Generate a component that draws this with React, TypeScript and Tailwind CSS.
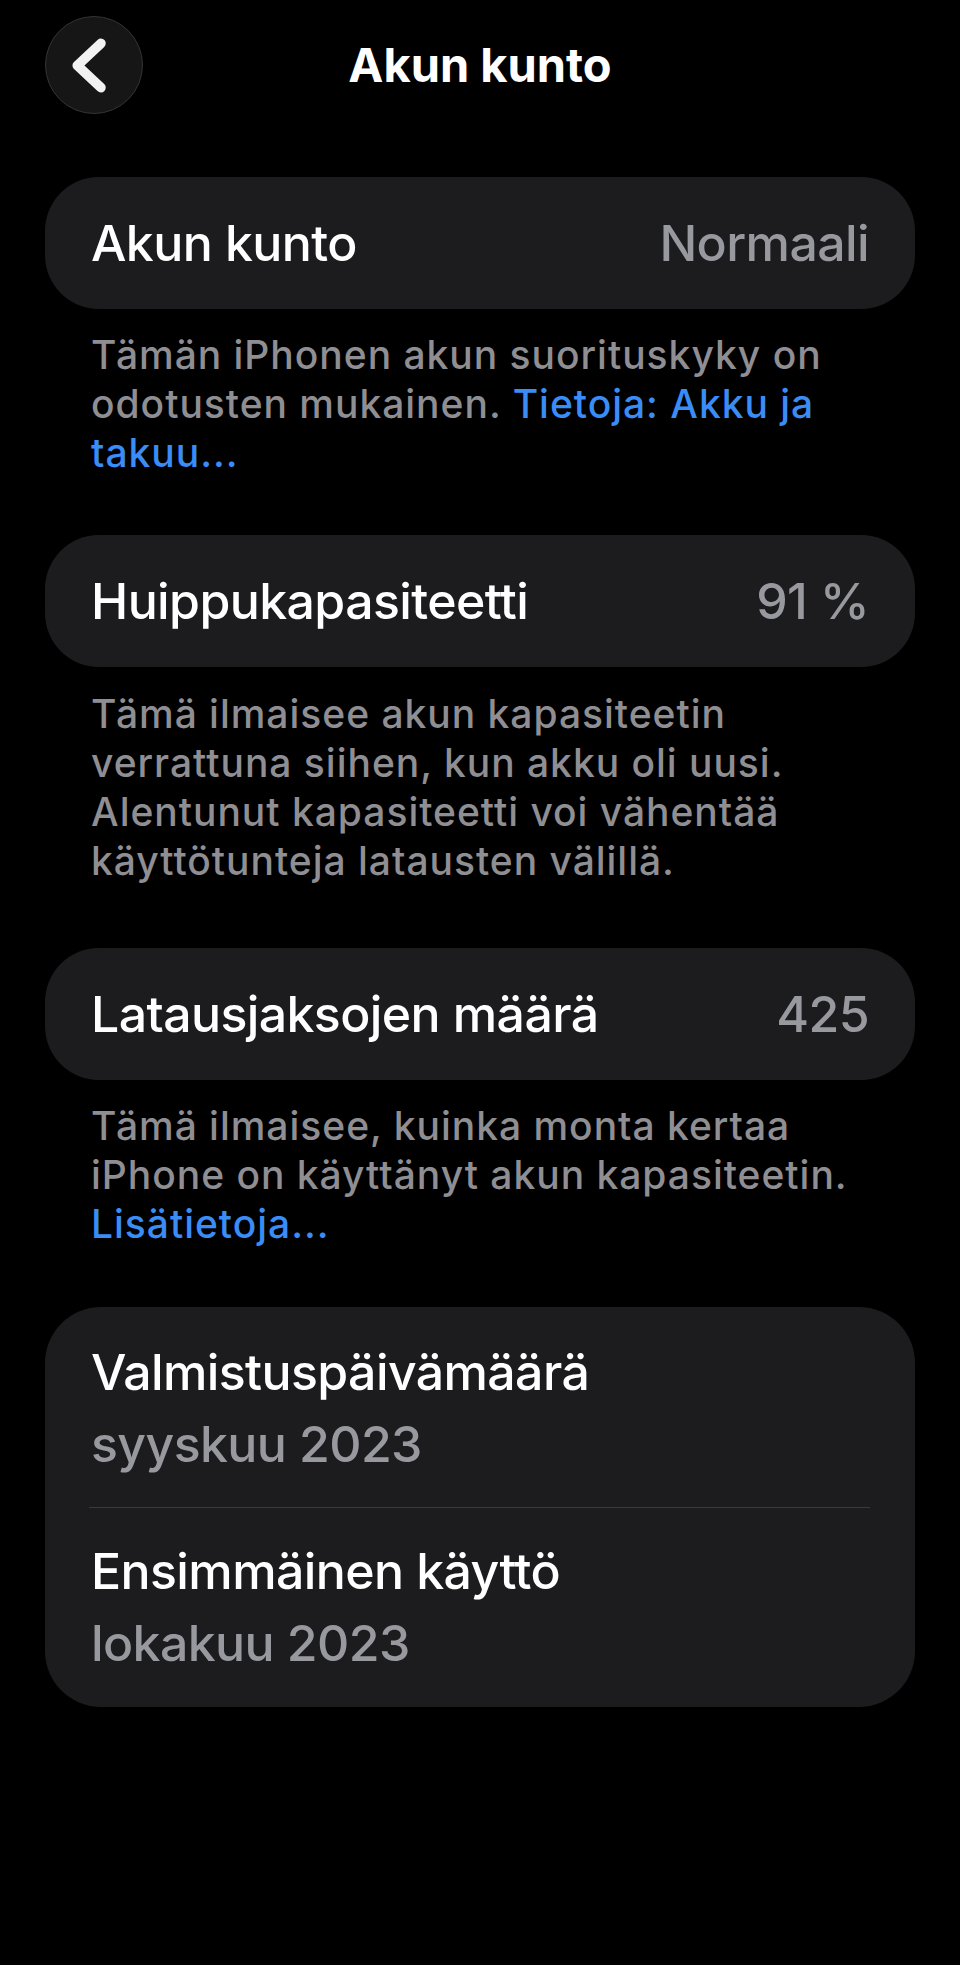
import type { ReactNode } from "react";

const font = "font-['Inter','Noto_Sans',sans-serif]";

function BackButton() {
  return (
    <button
      type="button"
      aria-label="Takaisin"
      className="flex h-[98px] w-[98px] items-center justify-center rounded-full border border-[#343436] bg-[#161617]"
    >
      <svg width="98" height="98" viewBox="0 0 98 98" fill="none" aria-hidden="true">
        <path
          d="M56 27 L32 49.5 L56 72"
          stroke="#f2f2f2"
          strokeWidth="10"
          strokeLinecap="round"
          strokeLinejoin="round"
        />
      </svg>
    </button>
  );
}

function ValueCard({ label, value }: { label: string; value: string }) {
  return (
    <div className="mx-[45px] flex h-[132px] items-center justify-between rounded-[54px] bg-[#1c1c1e] px-[46px] text-[50px] font-medium tracking-[-0.012em]">
      <span className="text-white">{label}</span>
      <span className="text-[#98989f]">{value}</span>
    </div>
  );
}

function Footer({ children, className = "" }: { children: ReactNode; className?: string }) {
  return (
    <p
      className={`mx-[45px] px-[46px] text-[39px] font-medium leading-[49px] tracking-[0.025em] whitespace-nowrap text-[#8e8e93] ${className}`}
    >
      {children}
    </p>
  );
}

function Link({ children }: { children: ReactNode }) {
  return <span className="text-[#3a8cf6]">{children}</span>;
}

function DateRow({ label, value, top, bottom }: { label: string; value: string; top: string; bottom: string }) {
  return (
    <div className={`px-[46px] text-[50px] font-medium leading-[60px] tracking-[-0.012em] ${top} ${bottom}`}>
      <div className="text-white">{label}</div>
      <div className="mt-[12px] text-[#98989f]">{value}</div>
    </div>
  );
}

export default function App() {
  return (
    <div className={`min-h-screen bg-black pt-[16px] pb-[120px] ${font}`}>
      <header className="grid h-[98px] grid-cols-[1fr_auto_1fr] items-center">
        <div className="pl-[45px]">
          <BackButton />
        </div>
        <h1 className="text-[47px] font-bold text-white">Akun kunto</h1>
        <div />
      </header>

      <div className="mt-[63px]">
        <ValueCard label="Akun kunto" value="Normaali" />
      </div>
      <Footer className="mt-[21px]">
        Tämän iPhonen akun suorituskyky on
        <br />
        odotusten mukainen. <Link>Tietoja: Akku ja</Link>
        <br />
        <Link>takuu...</Link>
      </Footer>

      <div className="mt-[58px]">
        <ValueCard label="Huippukapasiteetti" value="91 %" />
      </div>
      <Footer className="mt-[22px]">
        Tämä ilmaisee akun kapasiteetin
        <br />
        verrattuna siihen, kun akku oli uusi.
        <br />
        Alentunut kapasiteetti voi vähentää
        <br />
        käyttötunteja latausten välillä.
      </Footer>

      <div className="mt-[63px]">
        <ValueCard label="Latausjaksojen määrä" value="425" />
      </div>
      <Footer className="mt-[21px]">
        Tämä ilmaisee, kuinka monta kertaa
        <br />
        iPhone on käyttänyt akun kapasiteetin.
        <br />
        <Link>Lisätietoja...</Link>
      </Footer>

      <section className="mx-[45px] mt-[59px] rounded-[56px] bg-[#1c1c1e]">
        <DateRow label="Valmistuspäivämäärä" value="syyskuu 2023" top="pt-[35px]" bottom="pb-[33px]" />
        <div className="ml-[44px] mr-[45px] h-px bg-[#3a3a3c]" />
        <DateRow label="Ensimmäinen käyttö" value="lokakuu 2023" top="pt-[33px]" bottom="pb-[34px]" />
      </section>
    </div>
  );
}
